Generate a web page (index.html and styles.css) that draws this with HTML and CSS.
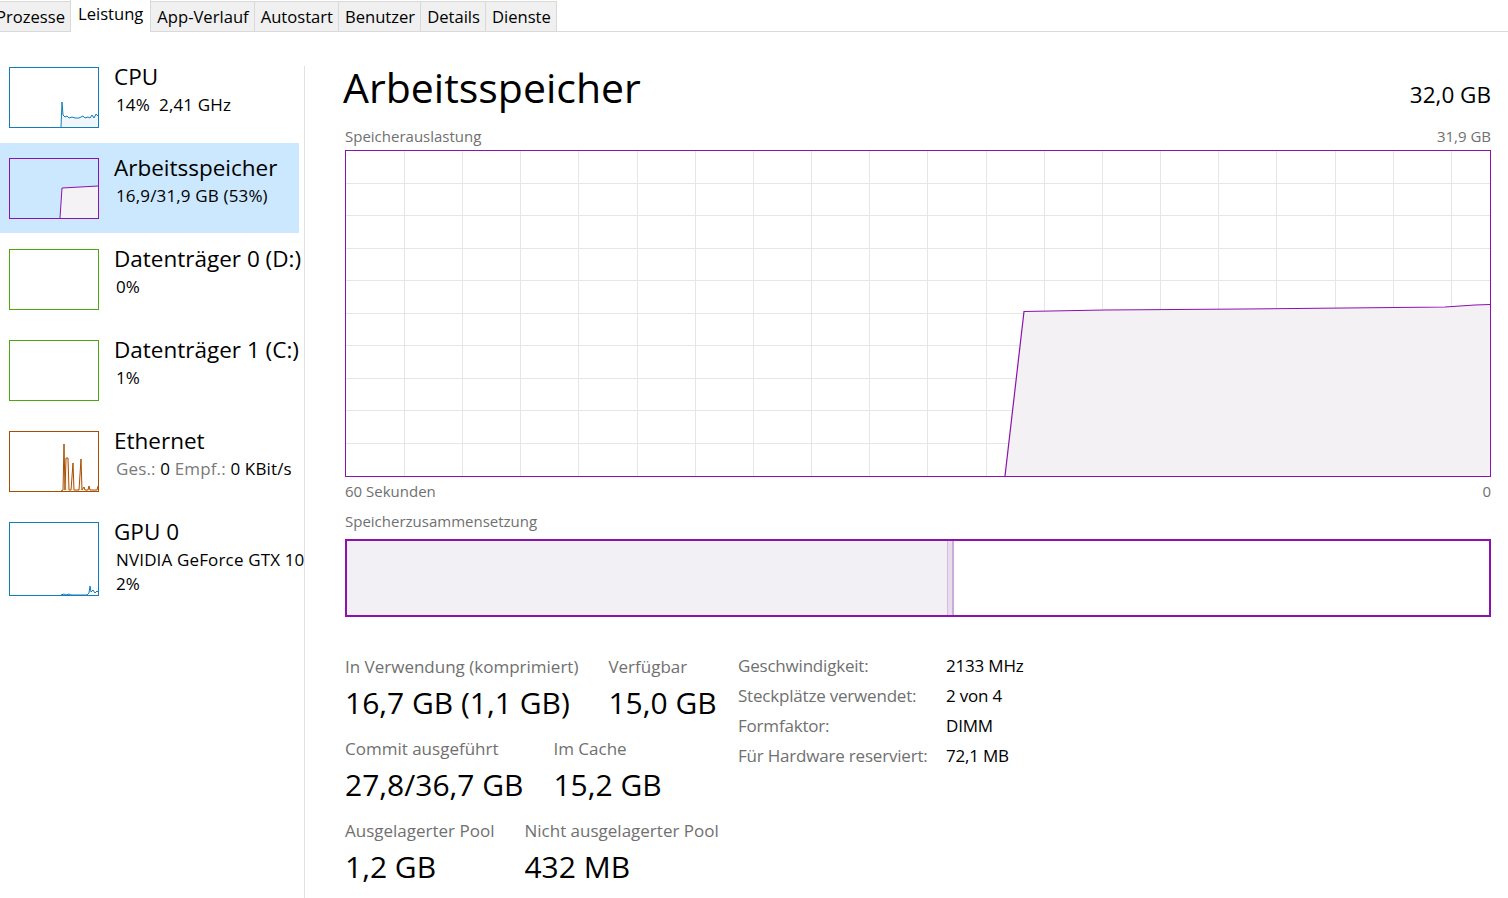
FILE: index.html
```html
<!DOCTYPE html>
<html lang="de">
<head>
<meta charset="utf-8">
<title>Task-Manager – Leistung</title>
<link rel="stylesheet" href="styles.css">
</head>
<body>
<div class="tabs">
  <div class="tab first">Prozesse</div>
  <div class="tab active">Leistung</div>
  <div class="tab">App-Verlauf</div>
  <div class="tab">Autostart</div>
  <div class="tab">Benutzer</div>
  <div class="tab">Details</div>
  <div class="tab">Dienste</div>
</div>
<div class="content">
  <div class="sidebar">
    <div class="item">
      <svg class="thumb" width="90" height="61" viewBox="0 0 90 61">
        <polygon class="f-blue" points="52,60 53,35 54,48 56,50 58,49 60,51 63,50 66,51 70,51 74,49 76,51 79,50 81,51 83,48 85,51 87,47 89,49 89,60"/>
        <polyline class="l-blue" points="52,60 53,35 54,48 56,50 58,49 60,51 63,50 66,51 70,51 74,49 76,51 79,50 81,51 83,48 85,51 87,47 89,49"/>
        <rect class="b-blue" x="0.5" y="0.5" width="89" height="60"/>
      </svg>
      <div class="info"><div class="name">CPU</div><div class="sub">14%&nbsp; 2,41 GHz</div></div>
    </div>
    <div class="item selected">
      <svg class="thumb" width="90" height="61" viewBox="0 0 90 61">
        <polygon class="f-purple" points="51,60 53,30 89,28 89,60"/>
        <polyline class="l-purple" points="51,60 53,30 89,28"/>
        <rect class="b-purple" x="0.5" y="0.5" width="89" height="60"/>
      </svg>
      <div class="info"><div class="name">Arbeitsspeicher</div><div class="sub">16,9/31,9 GB (53%)</div></div>
    </div>
    <div class="item">
      <svg class="thumb" width="90" height="61" viewBox="0 0 90 61">
        <rect class="b-green" x="0.5" y="0.5" width="89" height="60"/>
      </svg>
      <div class="info"><div class="name">Datenträger 0 (D:)</div><div class="sub">0%</div></div>
    </div>
    <div class="item">
      <svg class="thumb" width="90" height="61" viewBox="0 0 90 61">
        <rect class="b-green" x="0.5" y="0.5" width="89" height="60"/>
      </svg>
      <div class="info"><div class="name">Datenträger 1 (C:)</div><div class="sub">1%</div></div>
    </div>
    <div class="item">
      <svg class="thumb" width="90" height="61" viewBox="0 0 90 61">
        <polygon class="f-orange" points="52,60 54,59 55,13 56,59 57,27 59,27 60,59 62,59 64,32 65,59 67,59 70,59 72,28 73,59 75,56 76,59 79,59 80,55 81,59 88,59 89,55 89,60"/>
        <polyline class="l-orange" points="52,60 54,59 55,13 56,59 57,27 59,27 60,59 62,59 64,32 65,59 67,59 70,59 72,28 73,59 75,56 76,59 79,59 80,55 81,59 88,59 89,55"/>
        <rect class="b-orange" x="0.5" y="0.5" width="89" height="60"/>
      </svg>
      <div class="info"><div class="name">Ethernet</div><div class="sub"><span class="dim">Ges.:</span>&nbsp;0 <span class="dim">Empf.:</span>&nbsp;0 KBit/s</div></div>
    </div>
    <div class="item gpu">
      <svg class="thumb" width="90" height="74" viewBox="0 0 90 74">
        <polyline class="l-blue" points="52,73 55,72 57,73 60,72 62,73 78,73 80,71 81,64 82,70 84,68 86,71 88,69 89,70"/>
        <rect class="b-blue" x="0.5" y="0.5" width="89" height="73"/>
      </svg>
      <div class="info"><div class="name">GPU 0</div><div class="sub">NVIDIA GeForce GTX 1060 6GB</div><div class="sub">2%</div></div>
    </div>
  </div>
  <div class="divider"></div>
  <div class="main">
    <div class="head">
      <h1 class="title">Arbeitsspeicher</h1>
      <div class="total">32,0 GB</div>
    </div>
    <div class="caption"><span>Speicherauslastung</span><span>31,9 GB</span></div>
    <svg class="graph" width="1146" height="327" viewBox="0 0 1146 327">
      <g class="grid">
        <line x1="59.5" y1="0" x2="59.5" y2="327"/><line x1="117.5" y1="0" x2="117.5" y2="327"/>
        <line x1="175.5" y1="0" x2="175.5" y2="327"/><line x1="233.5" y1="0" x2="233.5" y2="327"/>
        <line x1="292.5" y1="0" x2="292.5" y2="327"/><line x1="350.5" y1="0" x2="350.5" y2="327"/>
        <line x1="408.5" y1="0" x2="408.5" y2="327"/><line x1="466.5" y1="0" x2="466.5" y2="327"/>
        <line x1="524.5" y1="0" x2="524.5" y2="327"/><line x1="582.5" y1="0" x2="582.5" y2="327"/>
        <line x1="641.5" y1="0" x2="641.5" y2="327"/><line x1="699.5" y1="0" x2="699.5" y2="327"/>
        <line x1="757.5" y1="0" x2="757.5" y2="327"/><line x1="815.5" y1="0" x2="815.5" y2="327"/>
        <line x1="873.5" y1="0" x2="873.5" y2="327"/><line x1="931.5" y1="0" x2="931.5" y2="327"/>
        <line x1="990.5" y1="0" x2="990.5" y2="327"/><line x1="1048.5" y1="0" x2="1048.5" y2="327"/>
        <line x1="1106.5" y1="0" x2="1106.5" y2="327"/>
        <line x1="0" y1="33.5" x2="1146" y2="33.5"/><line x1="0" y1="65.5" x2="1146" y2="65.5"/>
        <line x1="0" y1="98.5" x2="1146" y2="98.5"/><line x1="0" y1="130.5" x2="1146" y2="130.5"/>
        <line x1="0" y1="163.5" x2="1146" y2="163.5"/><line x1="0" y1="195.5" x2="1146" y2="195.5"/>
        <line x1="0" y1="228.5" x2="1146" y2="228.5"/><line x1="0" y1="260.5" x2="1146" y2="260.5"/>
        <line x1="0" y1="293.5" x2="1146" y2="293.5"/>
      </g>
      <polygon class="area" points="660,326 679,161.5 760,160 900,159 1000,158 1100,157 1130,155 1145,154.5 1145,326"/>
      <polyline class="usage" points="660,326 679,161.5 760,160 900,159 1000,158 1100,157 1130,155 1145,154.5"/>
      <rect class="frame" x="0.5" y="0.5" width="1145" height="326"/>
    </svg>
    <div class="caption axis"><span>60 Sekunden</span><span>0</span></div>
    <div class="caption">Speicherzusammensetzung</div>
    <div class="comp">
      <div class="inuse" style="width:601px"></div>
      <div class="modified"></div>
    </div>
    <div class="stats">
      <div class="left">
        <div class="row">
          <div class="stat"><div class="lbl">In Verwendung (komprimiert)</div><div class="val">16,7 GB (1,1 GB)</div></div>
          <div class="stat"><div class="lbl">Verfügbar</div><div class="val">15,0 GB</div></div>
        </div>
        <div class="row">
          <div class="stat"><div class="lbl">Commit ausgeführt</div><div class="val">27,8/36,7 GB</div></div>
          <div class="stat"><div class="lbl">Im Cache</div><div class="val">15,2 GB</div></div>
        </div>
        <div class="row">
          <div class="stat"><div class="lbl">Ausgelagerter Pool</div><div class="val">1,2 GB</div></div>
          <div class="stat"><div class="lbl">Nicht ausgelagerter Pool</div><div class="val">432 MB</div></div>
        </div>
      </div>
      <div class="right">
        <div class="k">Geschwindigkeit:</div><div class="v">2133 MHz</div>
        <div class="k">Steckplätze verwendet:</div><div class="v">2 von 4</div>
        <div class="k">Formfaktor:</div><div class="v">DIMM</div>
        <div class="k">Für Hardware reserviert:</div><div class="v">72,1 MB</div>
      </div>
    </div>
  </div>
</div>
</body>
</html>
```
FILE: styles.css
```css
* { box-sizing: border-box; }
html, body { margin: 0; padding: 0; background: #fff; }
body {
  font-family: "Open Sans", "Noto Sans", sans-serif;
  color: #000;
  width: 1508px;
  height: 898px;
  overflow: hidden;
}

/* Tabs */
.tabs {
  display: flex;
  align-items: flex-end;
  height: 32px;
  border-bottom: 1px solid #d9d9d9;
}
.tab {
  height: 30px;
  padding: 0 5px 0 6px;
  font-size: 16.6px;
  line-height: 29px;
  background: #f0f0f0;
  border: 1px solid #d9d9d9;
  border-bottom: none;
  border-left: none;
  color: #000;
  white-space: nowrap;
}
.tab.first { margin-left: -4px; padding-left: 0; padding-right: 5px; }
.tab.active {
  height: 33px;
  margin-bottom: -1px;
  background: #fff;
  line-height: 28px;
  padding: 0 7px;
  border-left: 1px solid #d9d9d9;
  margin-left: -1px;
}

/* Layout */
.content {
  display: flex;
  height: 866px;
}
.sidebar {
  width: 304px;
  flex: none;
  overflow: hidden;
  padding-top: 20px;
  display: flex;
  flex-direction: column;
  gap: 1px;
}
.divider {
  width: 1px;
  flex: none;
  background: #e2e2e2;
  margin-top: 34px;
}
.item {
  width: 299px;
  height: 90px;
  display: flex;
  align-items: flex-start;
  padding: 15px 0 0 9px;
  gap: 15px;
  white-space: nowrap;
  flex: none;
}
.item.gpu { height: 100px; }
.item.selected { background: #cce8ff; }
.thumb { display: block; flex: none; }
.name {
  font-size: 22.5px;
  line-height: 24px;
  margin-top: -2px;
}
.sub {
  font-size: 17px;
  line-height: 24px;
  letter-spacing: 0.15px;
  padding-left: 2px;
  margin-top: 4px;
}
.gpu .sub + .sub { margin-top: 0; }
.dim { color: #7a7a7a; }

.thumb rect { fill: none; stroke-width: 1; }
.thumb polyline { fill: none; stroke-width: 1; }
.b-blue, .l-blue { stroke: #117dbb; }
.f-blue { fill: #f1f6fa; }
.b-purple, .l-purple { stroke: #8b12ae; }
.f-purple { fill: #f4f2f4; }
.b-green { stroke: #4da60c; }
.b-orange, .l-orange { stroke: #a74f01; }
.f-orange { fill: #fcf3eb; }

/* Main */
.main {
  flex: 1;
  padding: 0 18px 0 40px;
}
.head {
  display: flex;
  justify-content: space-between;
  align-items: baseline;
  margin-top: 26px;
  height: 68px;
}
.title {
  margin: 0 0 0 -2px;
  font-size: 41px;
  font-weight: 400;
  line-height: 58px;
}
.total {
  font-size: 22.5px;
}
.caption {
  display: flex;
  justify-content: space-between;
  font-size: 15px;
  line-height: 20px;
  color: #707070;
  height: 20px;
  margin-bottom: 4px;
}
.graph { display: block; }
.grid line { stroke: #e8e4ea; stroke-width: 1; }
.area { fill: #f4f1f5; }
.usage { fill: none; stroke: #8b12ae; stroke-width: 1.2; }
.frame { fill: none; stroke: #8b12ae; stroke-width: 1; }
.caption.axis { margin-top: 4px; margin-bottom: 10px; }

.comp {
  display: flex;
  height: 78px;
  border: 2px solid #8b12ae;
  margin-top: 8px;
}
.inuse { background: #f2f0f4; border-right: 1px solid #d2bedc; }
.modified { width: 6px; background: #e8dcef; border-right: 2px solid #c9acd8; }

/* Stats */
.stats {
  display: flex;
  margin-top: 38px;
}
.left { display: flex; flex-direction: column; gap: 10px; width: 393px; flex: none; }
.row { display: flex; gap: 30px; }
.stat { display: flex; flex-direction: column; }
.lbl {
  font-size: 17px;
  line-height: 24px;
  color: #707070;
}
.val {
  font-size: 30px;
  line-height: 48px;
}
.right {
  display: grid;
  grid-template-columns: 208px auto;
  grid-auto-rows: 30px;
  align-content: start;
  font-size: 17px;
  line-height: 22px;
  letter-spacing: -0.2px;
}
.k { color: #707070; }
.v { color: #000; }
```
